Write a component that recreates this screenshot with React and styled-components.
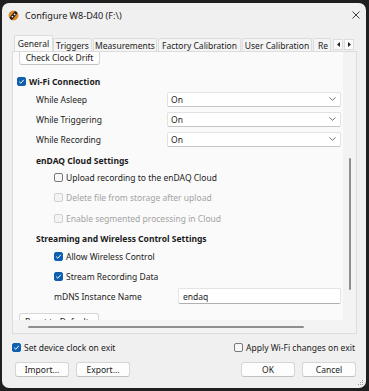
import React from 'react';
import styled, { createGlobalStyle } from 'styled-components';

const GlobalStyle = createGlobalStyle`
  html, body { margin: 0; padding: 0; background: #1f1f1f; }
  body {
    font-family: "Noto Sans", "Liberation Sans", sans-serif;
    font-size: 8.5px;
    color: #1b1b1b;
  }
`;

const Window = styled.div`
  position: relative;
  margin: 3px 0 0 2px;
  width: 364px;
  height: 385px;
  background: #f0f0f0;
  border-radius: 7px;
  overflow: hidden;
  display: flex;
  flex-direction: column;
`;

const TitleBar = styled.div`
  height: 24px;
  display: flex;
  align-items: center;
  gap: 6px;
  padding: 0 6px;
`;

const Title = styled.span`
  flex: 1;
  font-size: 9.1px;
  color: #1a1a1a;
`;

const Body = styled.div`
  display: flex;
  flex-direction: column;
  padding: 8px 9px 0 10px;
`;

const TabStrip = styled.div`
  height: 16px;
  display: flex;
  align-items: flex-end;
  gap: 1px;
  padding-left: 4px;
`;

const Tab = styled.div`
  width: ${p => p.$w}px;
  height: ${p => (p.$active ? 16 : 13)}px;
  box-sizing: border-box;
  display: flex;
  align-items: center;
  justify-content: ${p => (p.$clip ? 'flex-start' : 'center')};
  padding-left: ${p => (p.$clip ? 4 : 0)}px;
  overflow: hidden;
  white-space: nowrap;
  background: ${p => (p.$active ? '#f9f9f9' : '#f4f4f4')};
  border: 1px solid #dcdcdc;
  border-bottom: none;
  border-radius: 2px 2px 0 0;
  margin: ${p => (p.$active ? '0 -1px 0 -2px' : '0')};
  position: relative;
  z-index: ${p => (p.$active ? 1 : 0)};
`;

const ArrowGroup = styled.div`
  display: flex;
  gap: 1px;
  margin-left: 1px;
  align-self: center;
  margin-top: 2px;
`;

const ArrowBtn = styled.div`
  width: 10px;
  height: 11px;
  box-sizing: border-box;
  border: 1px solid #dcdcdc;
  background: #fbfbfb;
  display: flex;
  align-items: center;
  justify-content: center;
`;

const Panel = styled.div`
  height: 283px;
  box-sizing: border-box;
  border: 1px solid #dcdcdc;
  background: #f3f3f3;
  display: grid;
  grid-template-columns: 330px 13px;
  grid-template-rows: 268px 13px;
`;

const Viewport = styled.div`
  background: #fafafa;
  overflow: hidden;
  display: flex;
  flex-direction: column;
  padding-left: 4px;
`;

const VScroll = styled.div`
  display: flex;
  justify-content: center;
  padding-top: 106px;
  padding-left: 1px;
  &::after {
    content: '';
    width: 2px;
    height: 132px;
    background: #8e8e8e;
    border-radius: 1px;
  }
`;

const HScroll = styled.div`
  display: flex;
  align-items: center;
  padding-left: 15px;
  &::after {
    content: '';
    width: 276px;
    height: 2px;
    background: #8e8e8e;
    border-radius: 1px;
  }
`;

const Button = styled.div`
  width: ${p => p.$w}px;
  height: ${p => p.$h || 15}px;
  flex: none;
  box-sizing: border-box;
  margin-top: ${p => p.$mt || 0}px;
  margin-left: ${p => p.$ml || 0}px;
  background: #fdfdfd;
  border: 1px solid #d6d6d6;
  border-bottom-color: #c2c2c2;
  border-radius: 3px;
  display: flex;
  align-items: center;
  justify-content: center;
  white-space: nowrap;
  color: #1a1a1a;
`;

const Row = styled.div`
  height: ${p => p.$h || 20}px;
  flex: none;
  margin-top: ${p => p.$mt || 0}px;
  padding-left: ${p => p.$indent || 0}px;
  display: flex;
  align-items: center;
  white-space: nowrap;
`;

const Label = styled.span`
  width: ${p => (p.$w ? `${p.$w}px` : 'auto')};
  flex: none;
  font-weight: ${p => (p.$bold ? 700 : 400)};
  color: ${p => (p.$disabled ? '#a3a3a3' : '#1b1b1b')};
`;

const Box = styled.span`
  width: 9px;
  height: 9px;
  flex: none;
  box-sizing: border-box;
  margin-right: ${p => p.$gap || 3}px;
  border-radius: 2px;
  border: 1px solid ${p => (p.$checked ? '#0f5fb0' : p.$disabled ? '#cfcfcf' : '#7a7a7a')};
  background: ${p => (p.$checked ? '#0f5fb0' : p.$disabled ? '#f4f4f4' : '#f7f7f7')};
  display: flex;
  align-items: center;
  justify-content: center;
`;

const Select = styled.div`
  flex: 1;
  height: 15px;
  margin-right: 2px;
  box-sizing: border-box;
  background: #ffffff;
  border: 1px solid #e2e2e2;
  border-bottom-color: #c4c4c4;
  border-radius: 2px;
  display: flex;
  align-items: center;
  justify-content: space-between;
  padding: 0 4px 0 3px;
`;

const Input = styled.div`
  flex: 1;
  height: 16px;
  margin-right: 2px;
  box-sizing: border-box;
  background: #ffffff;
  border: 1px solid #e4e4e4;
  border-bottom-color: #b0b0b0;
  border-radius: 2px;
  display: flex;
  align-items: center;
  padding-left: 4px;
`;

const OptionRow = styled.div`
  height: 14px;
  margin-top: 6px;
  display: flex;
  align-items: center;
  justify-content: space-between;
  padding-right: 2px;
`;

const Option = styled.div`
  display: flex;
  align-items: center;
`;

const ButtonRow = styled.div`
  margin-top: 8px;
  display: flex;
  justify-content: space-between;
  padding: 0 1px 0 3px;
`;

const ButtonGroup = styled.div`
  display: flex;
  gap: 7px;
`;

const Grip = styled.svg`
  position: absolute;
  right: 2px;
  bottom: 2px;
`;

function Check({ checked, disabled, gap }) {
  return (
    <Box $checked={checked} $disabled={disabled} $gap={gap}>
      {checked && (
        <svg width="7" height="7" viewBox="0 0 7 7">
          <polyline points="1.2,3.7 2.8,5.2 5.8,1.8" fill="none" stroke="#fff" strokeWidth="1" />
        </svg>
      )}
    </Box>
  );
}

function Chevron() {
  return (
    <svg width="7" height="4" viewBox="0 0 7 4">
      <polyline points="0.5,0.5 3.5,3.3 6.5,0.5" fill="none" stroke="#606060" strokeWidth="0.9" />
    </svg>
  );
}

function AppIcon() {
  return (
    <svg width="11" height="11" viewBox="0 0 11 11">
      <circle cx="5.5" cy="5.5" r="4.6" fill="#e88a1a" stroke="#9a4f00" strokeWidth="0.6" strokeDasharray="1.2 0.8" />
      <rect x="3.8" y="0.8" width="3.4" height="9.4" rx="1.6" fill="#1d1d1d" transform="rotate(40 5.5 5.5)" />
      <circle cx="4.4" cy="6.6" r="0.9" fill="#f0f0f0" />
      <circle cx="6.6" cy="4.4" r="0.9" fill="#f0f0f0" />
    </svg>
  );
}

const tabs = [
  { name: 'General', w: 39, active: true },
  { name: 'Triggers', w: 39 },
  { name: 'Measurements', w: 64 },
  { name: 'Factory Calibration', w: 83 },
  { name: 'User Calibration', w: 70 },
  { name: 'Recording', w: 18, clip: true },
];

const selects = ['While Asleep', 'While Triggering', 'While Recording'];

export default function App() {
  return (
    <>
      <GlobalStyle />
      <Window>
        <TitleBar>
          <AppIcon />
          <Title>Configure W8-D40 (F:\)</Title>
          <svg width="8" height="8" viewBox="0 0 8 8">
            <path d="M0.5 0.5 L7.5 7.5 M7.5 0.5 L0.5 7.5" stroke="#2a2a2a" strokeWidth="0.9" />
          </svg>
        </TitleBar>
        <Body>
          <TabStrip>
            {tabs.map(t => (
              <Tab key={t.name} $w={t.w} $active={t.active} $clip={t.clip}>
                {t.clip ? 'Re' : t.name}
              </Tab>
            ))}
            <ArrowGroup>
              <ArrowBtn>
                <svg width="3" height="5" viewBox="0 0 3 5"><polygon points="3,0 3,5 0,2.5" fill="#222" /></svg>
              </ArrowBtn>
              <ArrowBtn>
                <svg width="3" height="5" viewBox="0 0 3 5"><polygon points="0,0 0,5 3,2.5" fill="#222" /></svg>
              </ArrowBtn>
            </ArrowGroup>
          </TabStrip>
          <Panel>
            <Viewport>
              <Button $w={81} $h={16} $mt={-3} $ml={2}>Check Clock Drift</Button>
              <Row $h={15} $mt={9}>
                <Check checked />
                <Label $bold>Wi-Fi Connection</Label>
              </Row>
              {selects.map(s => (
                <Row key={s} $indent={19}>
                  <Label $w={131}>{s}</Label>
                  <Select>
                    <span>On</span>
                    <Chevron />
                  </Select>
                </Row>
              ))}
              <Row $mt={1} $indent={19}>
                <Label $bold>enDAQ Cloud Settings</Label>
              </Row>
              <Row $mt={-3} $indent={37}>
                <Check />
                <Label>Upload recording to the enDAQ Cloud</Label>
              </Row>
              <Row $mt={0.5} $indent={37}>
                <Check disabled />
                <Label $disabled>Delete file from storage after upload</Label>
              </Row>
              <Row $mt={0.5} $indent={37}>
                <Check disabled />
                <Label $disabled>Enable segmented processing in Cloud</Label>
              </Row>
              <Row $indent={19}>
                <Label $bold>Streaming and Wireless Control Settings</Label>
              </Row>
              <Row $mt={-2} $indent={37}>
                <Check checked />
                <Label>Allow Wireless Control</Label>
              </Row>
              <Row $indent={37}>
                <Check checked />
                <Label>Stream Recording Data</Label>
              </Row>
              <Row $indent={37}>
                <Label $w={124}>mDNS Instance Name</Label>
                <Input>endaq</Input>
              </Row>
              <Button $w={80} $h={16} $mt={7} $ml={2}>Reset to Defaults</Button>
            </Viewport>
            <VScroll />
            <HScroll />
            <div />
          </Panel>
          <OptionRow>
            <Option>
              <Check checked />
              <Label>Set device clock on exit</Label>
            </Option>
            <Option>
              <Check />
              <Label>Apply Wi-Fi changes on exit</Label>
            </Option>
          </OptionRow>
          <ButtonRow>
            <ButtonGroup>
              <Button $w={54}>Import...</Button>
              <Button $w={54}>Export...</Button>
            </ButtonGroup>
            <ButtonGroup>
              <Button $w={54}>OK</Button>
              <Button $w={54}>Cancel</Button>
            </ButtonGroup>
          </ButtonRow>
        </Body>
        <Grip width="6" height="6" viewBox="0 0 6 6">
          <rect x="4" y="0" width="1" height="1" fill="#999" />
          <rect x="2" y="2" width="1" height="1" fill="#999" />
          <rect x="4" y="2" width="1" height="1" fill="#999" />
          <rect x="0" y="4" width="1" height="1" fill="#999" />
          <rect x="2" y="4" width="1" height="1" fill="#999" />
          <rect x="4" y="4" width="1" height="1" fill="#999" />
        </Grip>
      </Window>
    </>
  );
}
